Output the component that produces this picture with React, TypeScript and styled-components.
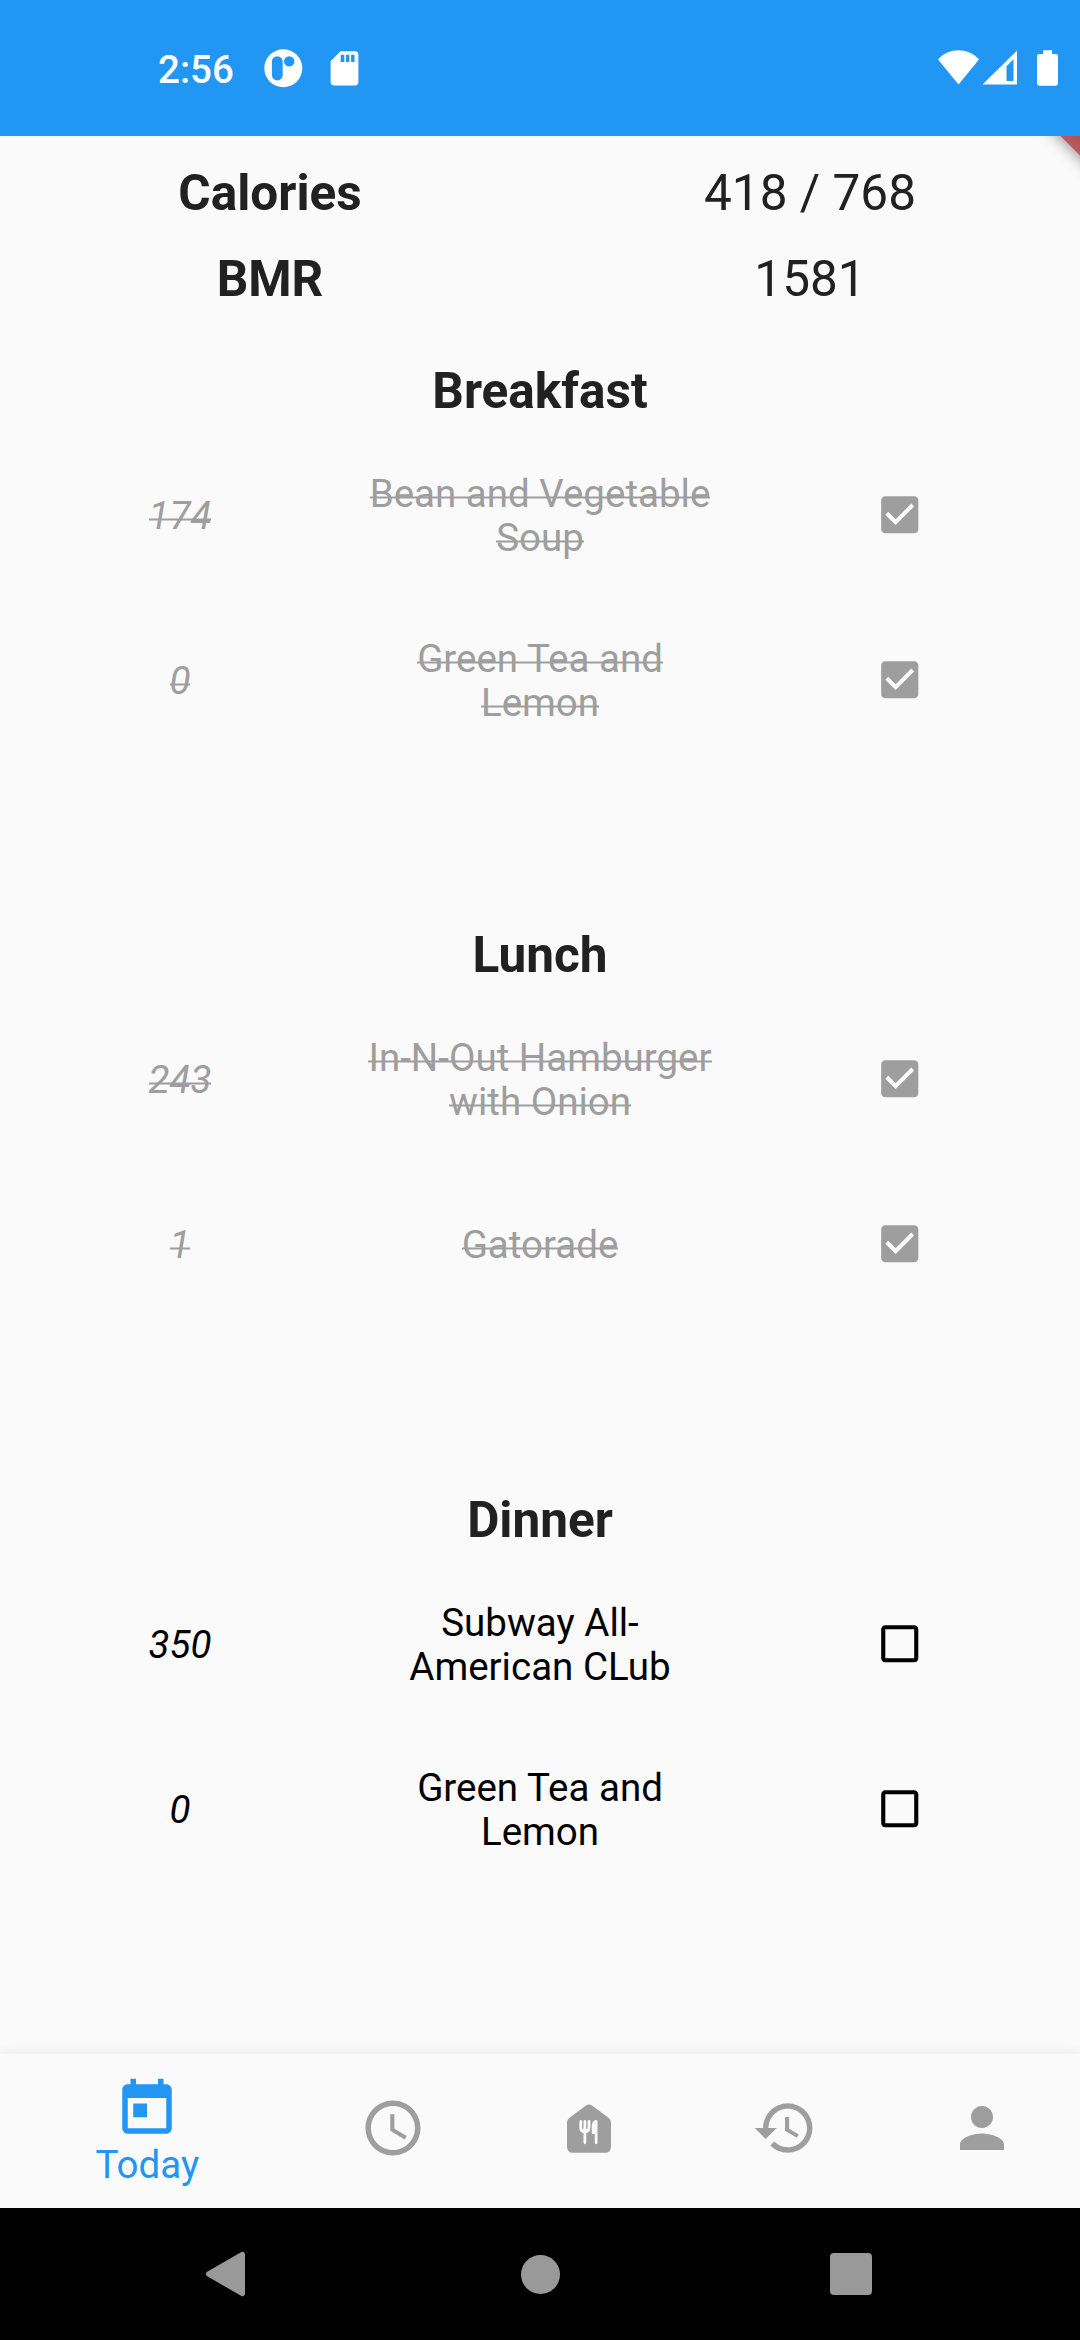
import React from 'react';
import styled, { createGlobalStyle, css } from 'styled-components';
import {
  MdToday,
  MdAccessTime,
  MdHistory,
  MdPerson,
  MdCheckBox,
  MdCheckBoxOutlineBlank,
} from 'react-icons/md';

const BLUE = '#2196f3';
const SURFACE = '#fafafa';
const GREY = '#9e9e9e';

const GlobalStyle = createGlobalStyle`
  *, *::before, *::after { box-sizing: border-box; }
  body {
    margin: 0;
    background: ${SURFACE};
    font-family: Roboto, "Noto Sans", sans-serif;
  }
`;

const Screen = styled.div`
  display: flex;
  flex-direction: column;
  width: 1080px;
  height: 2340px;
  overflow: hidden;
  background: ${SURFACE};
`;

const StatusBar = styled.header`
  display: flex;
  align-items: center;
  flex: none;
  height: 136px;
  padding: 0 22px 0 158px;
  background: ${BLUE};
  color: #fff;
`;

const Clock = styled.time`
  width: 106px;
  font-size: 38.5px;
  font-weight: 500;
  line-height: 46px;
  padding-top: 3px;
`;

const StatusGlyphs = styled.div<{ $end?: boolean }>`
  display: flex;
  align-items: center;
  margin-left: ${(p) => (p.$end ? 'auto' : '0')};
  svg { display: block; }
`;

const Content = styled.main`
  position: relative;
  flex: none;
  height: 1918px;
  padding-top: 14px;
  overflow: hidden;
`;

const BannerCorner = styled.svg`
  position: absolute;
  top: 0;
  right: 0;
`;

const Summary = styled.dl`
  display: grid;
  grid-template-columns: 1fr 1fr;
  grid-auto-rows: 86px;
  margin: 0;
  color: #212121;
  font-size: 49.5px;
  line-height: 86px;
  text-align: center;
`;

const SummaryLabel = styled.dt`
  font-weight: 700;
`;

const SummaryValue = styled.dd`
  margin: 0;
`;

const Meal = styled.section`
  height: 564.5px;
  padding-top: 39.75px;
`;

const MealTitle = styled.h2`
  margin: 0;
  height: 70.45px;
  color: #212121;
  font-size: 49.5px;
  font-weight: 700;
  line-height: 58px;
  text-align: center;
`;

const FoodRow = styled.div<{ $done: boolean }>`
  display: grid;
  grid-template-columns: repeat(3, 360px);
  align-items: center;
  height: 165px;
  color: ${(p) => (p.$done ? GREY : '#000')};
  font-size: 38.5px;
  line-height: 44px;
  text-align: center;
`;

const FoodCalories = styled.div`
  padding-top: 1.7px;
  font-style: italic;
`;

const FoodName = styled.div`
  padding-top: 1.7px;
  white-space: pre-line;
`;

/* The strike sits just under the hyphens, lower than line-through would put it. */
const Strike = styled.span<{ $on: boolean }>`
  ${(p) =>
    p.$on &&
    css`
      background: linear-gradient(
        transparent 25px,
        rgba(158, 158, 158, 0.5) 25px 26px,
        ${GREY} 26px 27px,
        rgba(158, 158, 158, 0.5) 27px 28px,
        transparent 28px
      );
      -webkit-box-decoration-break: clone;
      box-decoration-break: clone;
    `}
`;

const FoodCheck = styled.div`
  display: flex;
  justify-content: center;
`;

const BottomNav = styled.nav`
  position: relative;
  display: flex;
  flex: none;
  height: 154px;
  background: ${SURFACE};
  box-shadow: 0 0 12px rgba(0, 0, 0, 0.09);
`;

const NavItem = styled.div<{ $active?: boolean }>`
  display: flex;
  flex: ${(p) => (p.$active ? 1.5 : 1)} 1 0;
  flex-direction: column;
  align-items: center;
  padding-top: ${(p) => (p.$active ? '21.5px' : '41px')};
  color: ${(p) => (p.$active ? BLUE : GREY)};
`;

const NavLabel = styled.span`
  font-size: 38.5px;
  line-height: 46px;
`;

const SystemNav = styled.footer`
  display: flex;
  align-items: center;
  flex: none;
  justify-content: space-between;
  height: 132px;
  padding: 0 208px 0 206px;
  background: #000;
  svg { display: block; }
`;

type Food = { calories: number; name: string; done: boolean };

const meals: { title: string; foods: Food[] }[] = [
  {
    title: 'Breakfast',
    foods: [
      { calories: 174, name: 'Bean and Vegetable\nSoup', done: true },
      { calories: 0, name: 'Green Tea and\nLemon', done: true },
    ],
  },
  {
    title: 'Lunch',
    foods: [
      { calories: 243, name: 'In-N-Out Hamburger\nwith Onion', done: true },
      { calories: 1, name: 'Gatorade', done: true },
    ],
  },
  {
    title: 'Dinner',
    foods: [
      { calories: 350, name: 'Subway All-\nAmerican CLub', done: false },
      { calories: 0, name: 'Green Tea and\nLemon', done: false },
    ],
  },
];

function FoodBankIcon({ size }: { size: number }) {
  return (
    <svg width={size} height={size} viewBox="0 0 24 24" fill="currentColor">
      <path d="M4 19V10a2 2 0 0 1 .8-1.6l6-4.5a2 2 0 0 1 2.4 0l6 4.5A2 2 0 0 1 20 10v9a2 2 0 0 1-2 2H6a2 2 0 0 1-2-2z" />
      <g fill={SURFACE}>
        <path d="M8.5 9.6a.5.5 0 0 1 1 0v2.7h.5V9.6a.5.5 0 0 1 1 0v2.7h.5V9.6a.5.5 0 0 1 1 0V12c0 1-.6 1.7-1.5 1.95V17.4a.5.5 0 0 1-1 0V13.95C9.1 13.7 8.5 13 8.5 12z" />
        <path d="M15.1 9.6V17.4a.5.5 0 0 1-1 0V14.2h-.6a.5.5 0 0 1-.5-.5V11.2c0-1 .8-2.1 1.6-2.1a.5.5 0 0 1 .5.5z" />
      </g>
    </svg>
  );
}

export default function App() {
  return (
    <>
      <GlobalStyle />
      <Screen>
        <StatusBar>
          <Clock>2:56</Clock>
          <StatusGlyphs>
            <svg width="96" height="40" viewBox="264 48 96 40" fill="#fff">
              <path
                fillRule="evenodd"
                d="M283.3 49.3a19 19 0 1 1 0 38a19 19 0 1 1 0-38zM277.3 56.2a5.4 5.4 0 0 0-5.4 5.4v13.4a5.4 5.4 0 0 0 10.8 0v-13.4a5.4 5.4 0 0 0-5.4-5.4zM289.2 56.2a5.2 5.2 0 1 0 0 10.4a5.2 5.2 0 1 0 0-10.4z"
              />
              <path
                fillRule="evenodd"
                d="M340.5 51.2H355a3.4 3.4 0 0 1 3.4 3.4V82a3.4 3.4 0 0 1-3.4 3.4H334a3.4 3.4 0 0 1-3.4-3.4V61.3zM340.7 54.7v7.3h3.6v-7.3zM346 54.7v7.3h3.4v-7.3zM351.1 54.7v7.3h3.4v-7.3z"
              />
            </svg>
          </StatusGlyphs>
          <StatusGlyphs $end>
            <svg width="120" height="40" viewBox="938 48 120 40" fill="#fff">
              <path d="M958.5 84.5L938 59.6C943.8 53 951 50.3 958.5 50.3S973.2 53 979 59.6z" />
              <path fillRule="evenodd" d="M1017 50.5V84.6H982.5zM1013.5 59.2L1006.5 66.2V81.1H1013.5z" />
              <path d="M1043.2 50.2h8.9v3.7h3.8a2.1 2.1 0 0 1 2.1 2.1v27.6a2.1 2.1 0 0 1-2.1 2.1h-16.8a2.1 2.1 0 0 1-2.1-2.1V56a2.1 2.1 0 0 1 2.1-2.1h4.1z" />
            </svg>
          </StatusGlyphs>
        </StatusBar>

        <Content>
          <BannerCorner width="60" height="60" viewBox="0 0 60 60">
            <defs>
              <filter id="bannerShadow" x="-50%" y="-50%" width="200%" height="200%">
                <feGaussianBlur stdDeviation="8" />
              </filter>
              <linearGradient id="bannerFill" x1="1" y1="0" x2="0.5" y2="0.5">
                <stop offset="0" stopColor="#ac5052" />
                <stop offset="1" stopColor="#bf595b" />
              </linearGradient>
            </defs>
            <path d="M40.5 0L20 -20H100V60L60 19.5z" fill="#000" opacity="0.5" filter="url(#bannerShadow)" />
            <path d="M40.5 0H60V19.5z" fill="url(#bannerFill)" />
          </BannerCorner>
          <Summary>
            <SummaryLabel>Calories</SummaryLabel>
            <SummaryValue>418 / 768</SummaryValue>
            <SummaryLabel>BMR</SummaryLabel>
            <SummaryValue>1581</SummaryValue>
          </Summary>
          {meals.map((meal) => (
            <Meal key={meal.title}>
              <MealTitle>{meal.title}</MealTitle>
              {meal.foods.map((food) => (
                <FoodRow key={food.name} $done={food.done}>
                  <FoodCalories>
                    <Strike $on={food.done}>{food.calories}</Strike>
                  </FoodCalories>
                  <FoodName>
                    <Strike $on={food.done}>{food.name}</Strike>
                  </FoodName>
                  <FoodCheck>
                    {food.done ? <MdCheckBox size={49.5} /> : <MdCheckBoxOutlineBlank size={49.5} />}
                  </FoodCheck>
                </FoodRow>
              ))}
            </Meal>
          ))}
        </Content>

        <BottomNav>
          <NavItem $active>
            <MdToday size={66} />
            <NavLabel>Today</NavLabel>
          </NavItem>
          <NavItem><MdAccessTime size={66} /></NavItem>
          <NavItem><FoodBankIcon size={66} /></NavItem>
          <NavItem><MdHistory size={66} /></NavItem>
          <NavItem><MdPerson size={66} /></NavItem>
        </BottomNav>

        <SystemNav>
          <svg width="40" height="46" viewBox="0 0 40 46" fill="#999">
            <path d="M35 1.2L1.2 20.8a2.6 2.6 0 0 0 0 4.4L35 44.8a2.5 2.5 0 0 0 4-2V3.2a2.5 2.5 0 0 0-4-2z" />
          </svg>
          <svg width="46" height="40" viewBox="0 0 46 40" fill="#999">
            <circle cx="25.5" cy="20.5" r="19.5" />
          </svg>
          <svg width="42" height="42" viewBox="0 0 42 42" fill="#999">
            <rect width="42" height="42" rx="4" />
          </svg>
        </SystemNav>
      </Screen>
    </>
  );
}
